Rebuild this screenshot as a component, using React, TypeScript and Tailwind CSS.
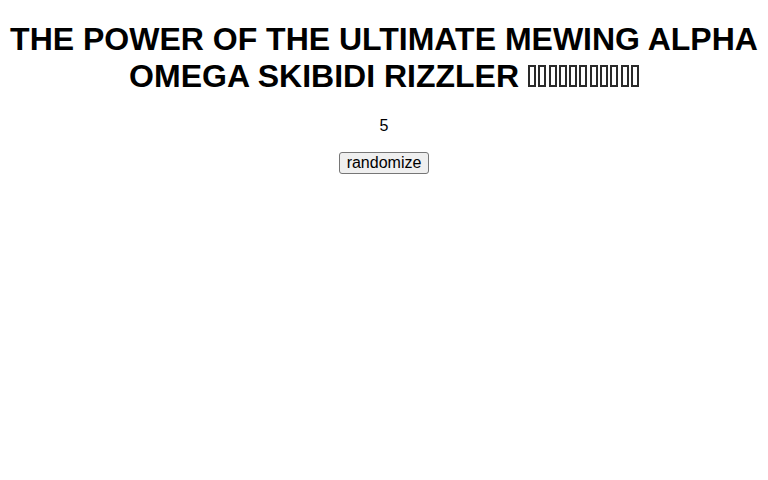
import { useState } from 'react';

// row of empty glyph boxes after the title
function Boxes({ n }: { n: number }) {
  return (
    <span className="inline-block whitespace-nowrap">
      {Array.from({ length: n }).map((_, i) => (
        <span
          key={i}
          className="mr-[2.3px] inline-block h-[22px] w-[8px] border-2 border-[#2a2a2a] align-baseline last:mr-0"
        />
      ))}
    </span>
  );
}

export default function App() {
  const [count, setCount] = useState(5);

  const randomize = () => {
    setCount(Math.floor(Math.random() * 10) + 1);
  };

  return (
    <div className="min-h-[480px] bg-white text-center text-black font-['Liberation_Sans',Arial,sans-serif]">
      <h1 className="my-[21.44px] text-[32px] font-bold leading-[normal]">
        THE POWER OF THE ULTIMATE MEWING ALPHA OMEGA SKIBIDI RIZZLER <Boxes n={11} />
      </h1>
      <p className="my-4 text-[16px] leading-[normal]">{count}</p>
      <button
        onClick={randomize}
        className="rounded-[3px] border border-[#767676] bg-[#efefef] px-[7px] py-[1px] text-[16px] leading-[normal] hover:bg-[#e5e5e5]"
      >
        randomize
      </button>
    </div>
  );
}
